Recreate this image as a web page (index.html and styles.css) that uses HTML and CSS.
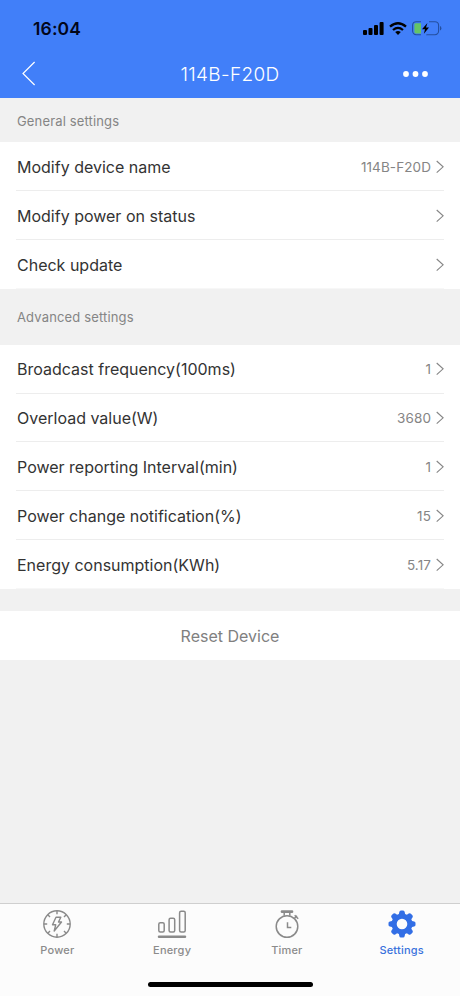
FILE: index.html
```html
<!DOCTYPE html>
<html lang="en">
<head>
<meta charset="utf-8">
<title>Device settings</title>
<link rel="stylesheet" href="styles.css">
</head>
<body>
<svg class="defs" aria-hidden="true">
  <symbol id="chevron" viewBox="0 0 8 14"><path d="M.7 1 7.1 6.8.7 12.6" fill="none" stroke="currentColor" stroke-width="1.1"/></symbol>
</svg>
<div class="screen">
  <header class="header">
    <div class="status">
      <span class="clock">16:04</span>
      <div class="status-icons">
        <svg width="21" height="13" viewBox="0 0 21 13"><rect x="0" y="8" width="4" height="5" rx="1"/><rect x="5.5" y="6" width="4" height="7" rx="1"/><rect x="11" y="3" width="4" height="10" rx="1"/><rect x="16.6" y="0" width="4" height="13" rx="1"/></svg>
        <svg class="wifi" width="18" height="13" viewBox="0 0 18 13"><g fill="none" stroke="#000" stroke-width="2.3"><path d="M1 4.7Q9-2.2 17 4.7"/><path d="M4 8Q9 3.7 14 8"/></g><path d="M6.2 10.1Q9 7.9 11.8 10.1L9 13Z"/></svg>
        <svg class="battery" width="30" height="15" viewBox="0 0 30 15"><rect x=".6" y=".7" width="26" height="13" rx="3.6" fill="none" stroke="#244f9f" stroke-width="1.1"/><path d="M28 5v4.6q1.4-.6 1.4-2.3T28 5Z" fill="#244f9f"/><path d="M9 0h8v3L14 15H9Z" fill="#417ff9"/><path d="M3.7 2.2H9v10.2H3.7q-1.3 0-1.3-1.3V3.5q0-1.3 1.3-1.3Z" fill="#65c466"/><path d="M15.4 2.1 10 8.2h3L11.9 12.7 17 6.6h-3Z"/></svg>
      </div>
    </div>
    <nav class="nav">
      <svg width="14" height="25" viewBox="0 0 14 25"><path d="M12.6 1 1 12.5 12.6 24" fill="none" stroke="#fff" stroke-width="1.2"/></svg>
      <h1 class="title">114B-F20D</h1>
      <svg width="26" height="6" viewBox="0 0 26 6" fill="#fff"><circle cx="3" cy="3" r="2.9"/><circle cx="12.5" cy="3" r="2.9"/><circle cx="22" cy="3" r="2.9"/></svg>
    </nav>
  </header>
  <main class="content">
    <h2 class="section general">General settings</h2>
    <div class="list basic">
      <div class="row"><span>Modify device name</span><span class="value">114B-F20D</span><svg class="chev"><use href="#chevron"/></svg></div>
      <div class="row"><span>Modify power on status</span><span class="value"></span><svg class="chev"><use href="#chevron"/></svg></div>
      <div class="row"><span>Check update</span><span class="value"></span><svg class="chev"><use href="#chevron"/></svg></div>
    </div>
    <h2 class="section advanced">Advanced settings</h2>
    <div class="list">
      <div class="row"><span>Broadcast frequency(100ms)</span><span class="value">1</span><svg class="chev"><use href="#chevron"/></svg></div>
      <div class="row"><span>Overload value(W)</span><span class="value">3680</span><svg class="chev"><use href="#chevron"/></svg></div>
      <div class="row"><span>Power reporting Interval(min)</span><span class="value">1</span><svg class="chev"><use href="#chevron"/></svg></div>
      <div class="row"><span>Power change notification(%)</span><span class="value">15</span><svg class="chev"><use href="#chevron"/></svg></div>
      <div class="row"><span>Energy consumption(KWh)</span><span class="value">5.17</span><svg class="chev"><use href="#chevron"/></svg></div>
    </div>
    <div class="reset">Reset Device</div>
  </main>
  <footer class="footer">
    <div class="tabs">
      <div class="tab"><svg width="30" height="30" viewBox="0 0 30 30" fill="none" stroke="#8a8a8a" stroke-width="1.4"><circle cx="15" cy="15" r="13.2"/><path d="M15 2v3.2M15 24.8V28M2 15h3.2M24.8 15H28M5.8 5.8 8 8M22 22l2.2 2.2M5.8 24.2 8 22M22 8l2.2-2.2"/><path d="M14 8.2h4.8L16.5 13h3L12.2 22l1.5-6.2h-3.2Z" stroke-linejoin="round"/></svg>Power</div>
      <div class="tab"><svg width="30" height="30" viewBox="0 0 30 30" fill="none" stroke="#8a8a8a" stroke-width="1.5"><rect x="1.8" y="13.8" width="5.4" height="9.2" rx="1.5"/><rect x="12.1" y="9.2" width="5.6" height="13.8" rx="1.5"/><rect x="22.6" y="2.2" width="5.6" height="20.8" rx="1.5"/><path d="M2 27.8h26" stroke-width="2.5" stroke-linecap="round"/></svg>Energy</div>
      <div class="tab"><svg width="30" height="30" viewBox="0 0 30 30" fill="none" stroke="#8a8a8a" stroke-width="1.5"><circle cx="15" cy="17.5" r="10.8"/><path d="M10 2.7h10" stroke-width="2.7" stroke-linecap="round"/><path d="M12.2 3.5v3.3M17.8 3.5v3.3M22 9.8l3-3M22.7 6.2l3.5 3.5M15.5 13.2v5.2h3.8"/></svg>Timer</div>
      <div class="tab active"><svg width="30" height="30" viewBox="0 0 30 30"><path fill="#326ee5" fill-rule="evenodd" d="M12.3 3q.3-1.5 1.6-1.5h2.2q1.3 0 1.6 1.5l.4 2 1.8.8L21.7 4.6q1.3-.8 2.2.1l1.5 1.5q.9.9.1 2.2l-1.2 1.8.8 1.8 2 .4q1.4.3 1.4 1.6v2q0 1.3-1.4 1.6l-2 .4-.8 1.8 1.2 1.8q.8 1.3-.1 2.2l-1.5 1.5q-.9.9-2.2.1l-1.8-1.2-1.8.8-.4 2q-.3 1.5-1.6 1.5h-2.2q-1.3 0-1.6-1.5l-.4-2-1.8-.8-1.8 1.2q-1.3.8-2.2-.1l-1.5-1.5q-.9-.9-.1-2.2l1.2-1.8-.8-1.8-2-.4q-1.4-.3-1.4-1.6v-2q0-1.3 1.4-1.6l2-.4.8-1.8-1.2-1.8q-.8-1.3.1-2.2l1.5-1.5q.9-.9 2.2-.1l1.8 1.2 1.8-.8ZM15 9.7a5.3 5.3 0 1 0 0 10.6 5.3 5.3 0 0 0 0-10.6Z"/></svg>Settings</div>
    </div>
    <div class="home"></div>
  </footer>
</div>
</body>
</html>
```
FILE: styles.css
```css
* { box-sizing: border-box; }
body { margin: 0; font-family: Inter, "Liberation Sans", sans-serif; color: #333; }
svg { display: block; flex: none; }
.defs { position: absolute; width: 0; height: 0; }
.screen { width: 460px; height: 996px; display: flex; flex-direction: column; background: #f1f1f1; }
.header { height: 98px; background: #417ff9; }
.status { height: 49px; padding: 7px 18px 0 33px; display: flex; align-items: center; justify-content: space-between; }
.clock { font-size: 17.5px; font-weight: 600; color: #02061a; letter-spacing: 0.15px; }
.status-icons { display: flex; align-items: center; }
.wifi { margin-left: 5px; }
.battery { margin-left: 5px; }
.nav { height: 49px; padding: 0 31px 0 22px; display: grid; grid-template-columns: 26px 1fr 26px; align-items: center; }
.title { margin: 0; text-align: center; font-size: 19px; font-weight: 350; color: #fff; letter-spacing: 0.35px; padding: 1px 0 0 9px; }
.content { flex: 1; }
.section { margin: 0; padding: 1px 17px 0; display: flex; align-items: center; font-size: 13px; font-weight: 400; color: #858585; letter-spacing: 0.15px; }
.general { height: 44px; }
.advanced { height: 56px; }
.list { background: #fff; padding: 0 16px; }
.row { height: 48.9px; display: flex; align-items: center; padding: 1px 0 0 1px; border-bottom: 1px solid #ededed; font-size: 16px; }
.basic .row { padding-top: 2px; }
.row:last-child { border-bottom-color: #f7f7f7; }
.value { margin-left: auto; font-size: 13.5px; color: #858585; letter-spacing: 0.1px; }
.chev { width: 8px; height: 14px; margin-left: 5px; color: #858585; }
.reset { height: 49px; margin-top: 22px; background: #fff; display: flex; align-items: center; justify-content: center; font-size: 16px; color: #808080; padding-top: 1px; }
.footer { height: 93px; background: #fcfcfc; border-top: 1px solid #cfcfcf; display: flex; flex-direction: column; align-items: center; justify-content: space-between; padding: 5px 0 9px; }
.tabs { width: 100%; display: grid; grid-template-columns: repeat(4, 1fr); padding-right: 1px; }
.tab { display: flex; flex-direction: column; align-items: center; gap: 4px; font-size: 11px; line-height: 14px; font-weight: 500; color: #8b8b8b; letter-spacing: 0.2px; }
.active { color: #3972dc; }
.home { width: 165px; height: 5px; border-radius: 3px; background: #000; }
```
